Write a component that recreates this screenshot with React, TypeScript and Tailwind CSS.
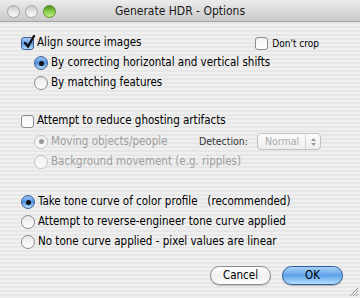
import React from "react"

const font = { fontFamily: '"DejaVu Sans Condensed", "DejaVu Sans", Verdana, sans-serif' }

function Checkbox({ checked = false }: { checked?: boolean }) {
  return (
    <span
      className={`relative inline-block w-[13px] h-[13px] rounded-[3px] border shrink-0 ${
        checked
          ? "border-[#3b5f93] bg-gradient-to-b from-[#a9cdf5] via-[#5b9ae3] to-[#b6dcfb]"
          : "border-[#8c8c8c] bg-gradient-to-b from-[#f4f4f4] to-[#ffffff]"
      }`}
    >
      {checked && (
        <svg className="absolute left-[1px] top-[-3px]" width="13" height="14" viewBox="0 0 13 14">
          <path d="M2 8 L5 11.5 L11 1" fill="none" stroke="#111" strokeWidth="2.4" strokeLinecap="round" />
        </svg>
      )}
    </span>
  )
}

function Radio({ checked = false, disabled = false }: { checked?: boolean; disabled?: boolean }) {
  let cls = "border-[#8a8a8a] bg-gradient-to-b from-[#e8e8e8] to-[#ffffff]"
  if (checked && !disabled) cls = "border-[#3a5f93] bg-gradient-to-b from-[#9cc6f3] via-[#4f91e0] to-[#b8defb]"
  if (disabled) cls = "border-[#c4c4c4] bg-gradient-to-b from-[#f0f0f0] to-[#fafafa]"
  return (
    <span className={`relative inline-flex items-center justify-center w-[14px] h-[14px] rounded-full border shrink-0 ${cls}`}>
      {checked && (
        <span className={`w-[5px] h-[5px] rounded-full ${disabled ? "bg-[#9a9a9a]" : "bg-[#111]"}`} />
      )}
    </span>
  )
}

function Light({ green = false }: { green?: boolean }) {
  return (
    <span
      className={`w-[13px] h-[13px] rounded-full border ${
        green
          ? "border-[#5a8f2c] bg-gradient-to-b from-[#4f8f1c] via-[#8ccf4c] to-[#c6ef8c]"
          : "border-[#a6a6a6] bg-gradient-to-b from-[#c9c9c9] via-[#e6e6e6] to-[#fbfbfb]"
      }`}
    />
  )
}

export default function App() {
  return (
    <div
      className="w-[360px] h-[298px] overflow-hidden relative text-[11.5px] text-black bg-[repeating-linear-gradient(180deg,#efefef_0px,#efefef_2px,#e7e7e7_2px,#e7e7e7_4px)]"
      style={font}
    >
      {/* title bar */}
      <div className="h-[22px] flex items-center relative bg-gradient-to-b from-[#ececec] to-[#c9c9c9] border-b border-[#a5a5a5] rounded-t-[5px]">
        <div className="flex gap-[5px] pl-[7px] pt-[1px]">
          <Light />
          <Light />
          <Light green />
        </div>
        <div className="absolute inset-0 flex items-center justify-center text-[12px] text-[#1a1a1a]">
          Generate HDR - Options
        </div>
      </div>

      <div className="pt-[11px] pl-[21px] pr-[17px]">
        {/* align */}
        <div className="h-[20px] flex items-center gap-[3px]">
          <Checkbox checked />
          <span>Align source images</span>
          <div className="ml-auto flex items-center gap-[4px] text-[10px] pr-[24px]">
            <Checkbox />
            <span>Don&apos;t crop</span>
          </div>
        </div>
        <div className="pl-[13px]">
          <div className="h-[20px] flex items-center gap-[3px]">
            <Radio checked />
            <span>By correcting horizontal and vertical shifts</span>
          </div>
          <div className="h-[20px] flex items-center gap-[3px]">
            <Radio />
            <span>By matching features</span>
          </div>
        </div>

        {/* ghosting */}
        <div className="h-[20px] flex items-center gap-[3px] mt-[18px]">
          <Checkbox />
          <span>Attempt to reduce ghosting artifacts</span>
        </div>
        <div className="pl-[13px] text-[#9d9d9d]">
          <div className="h-[21px] flex items-center gap-[3px]">
            <Radio checked disabled />
            <span>Moving objects/people</span>
            <span className="ml-auto text-[10.5px] text-[#333] mr-[6px]">Detection:</span>
            <div className="w-[64px] h-[17px] mr-[22px] rounded-[4px] border border-[#c2c2c2] bg-gradient-to-b from-[#fdfdfd] to-[#ededed] flex items-center text-[10.5px] text-[#a8a8a8]">
              <span className="flex-1 pl-[7px]">Normal</span>
              <span className="w-[15px] h-full border-l border-[#d4d4d4] flex items-center justify-center">
                <svg width="7" height="10" viewBox="0 0 7 10">
                  <path d="M1 4 L3.5 1 L6 4 Z M1 6 L3.5 9 L6 6 Z" fill="#9a9a9a" />
                </svg>
              </span>
            </div>
          </div>
          <div className="h-[20px] flex items-center gap-[3px]">
            <Radio disabled />
            <span>Background movement (e.g. ripples)</span>
          </div>
        </div>

        {/* tone curve */}
        <div className="mt-[20px]">
          <div className="h-[20px] flex items-center gap-[3px]">
            <Radio checked />
            <span>Take tone curve of color profile&nbsp;&nbsp; (recommended)</span>
          </div>
          <div className="h-[20px] flex items-center gap-[3px]">
            <Radio />
            <span>Attempt to reverse-engineer tone curve applied</span>
          </div>
          <div className="h-[20px] flex items-center gap-[3px]">
            <Radio />
            <span>No tone curve applied - pixel values are linear</span>
          </div>
        </div>

        {/* buttons */}
        <div className="flex justify-end gap-[11px] mt-[14px]">
          <button className="w-[61px] h-[19px] rounded-full border border-[#8b8b8b] bg-gradient-to-b from-[#ffffff] via-[#f0f0f0] to-[#fdfdfd] text-[11.5px] shadow-[0_1px_1px_rgba(0,0,0,0.2)]">
            Cancel
          </button>
          <button className="w-[61px] h-[19px] rounded-full border border-[#2d5d9c] bg-gradient-to-b from-[#a9d1f7] via-[#5ea3ea] to-[#b5e1fd] text-[11.5px] shadow-[0_1px_1px_rgba(0,0,0,0.25)]">
            OK
          </button>
        </div>
      </div>

      {/* resize grip */}
      <svg className="absolute right-[1px] bottom-[1px]" width="12" height="12" viewBox="0 0 12 12">
        <path d="M11 3 L3 11 M11 6 L6 11 M11 9 L9 11" stroke="#9a9a9a" strokeWidth="1" />
      </svg>
    </div>
  )
}
